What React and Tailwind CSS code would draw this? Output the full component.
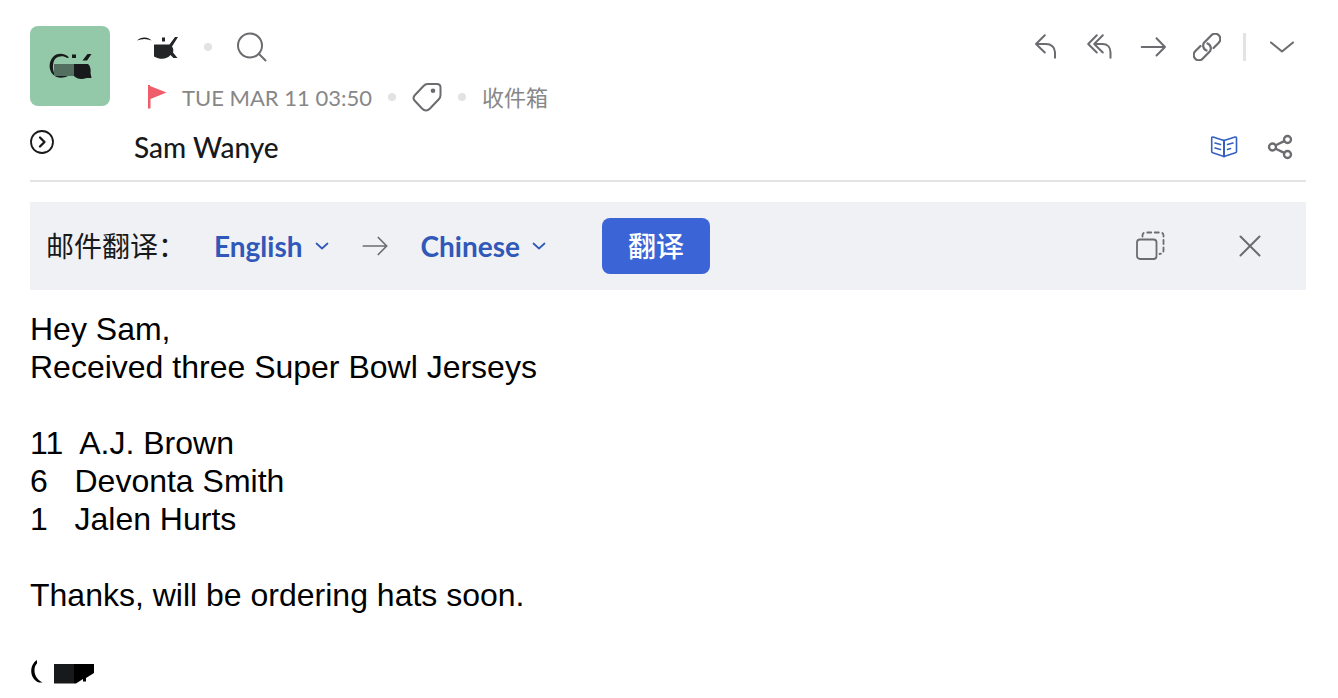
import clsx from 'clsx';

const LATO = "font-['Lato','Noto_Sans_CJK_SC',sans-serif]";

const strokeProps = {
    fill: 'none',
    stroke: 'currentColor',
    strokeWidth: 2,
    strokeLinecap: 'round',
    strokeLinejoin: 'round',
};

function Icon({ size = 28, className, children, ...rest }) {
    return (
        <svg
            width={size}
            height={size}
            viewBox={`0 0 ${size} ${size}`}
            className={clsx('shrink-0', className)}
            aria-hidden="true"
            {...strokeProps}
            {...rest}
        >
            {children}
        </svg>
    );
}

const mailActions = [
    {
        label: 'Reply',
        icon: <path d="M13.800 2.300L5 11l8.800 8.500M5 11h10c5.200 0 9 3.200 9 8.300v5.500" />,
    },
    {
        label: 'Reply all',
        icon: <path d="M11.800 2.300L3.200 11l8.600 8.500M17.800 2.300L9.200 11l8.600 8.500M9.200 11h8.300c4.700 0 8 3 8 8.300v5.500" />,
    },
    {
        label: 'Forward',
        icon: <path d="M2.700 14h23.300M17.500 5.300l8.500 8.700-8.500 8.500" />,
    },
    {
        label: 'Copy link',
        icon: (
            <g strokeWidth="2.200">
                <path d="M20.500 15l5.300-5.300a5.200 5.200 0 0 0-7.400-7.400L12 8.700a5.200 5.200 0 0 0 1.500 8.800" />
                <path d="M7.500 13l-5.300 5.300a5.200 5.200 0 0 0 7.400 7.400l6.400-6.400a5.200 5.200 0 0 0-1.500-8.800" />
            </g>
        ),
    },
];

function Dot() {
    return <span className="size-2 shrink-0 rounded-full bg-[#e3e3e3]" />;
}

function Avatar() {
    return (
        <div className="flex size-20 items-center justify-center rounded-lg bg-[#93c9a9]">
            <svg width="44" height="28" viewBox="0 0 44 28" aria-hidden="true">
                <path d="M21 5.500C17 1 9 .5 5 5C.5 10 .5 18 5 22.500C9 26.500 15 26.500 20 24H8C4 20 4 10 7.500 6.500C11 3.500 16 3.500 19 6z" fill="#17191a" />
                <path d="M6 12h20v12H6z" fill="#526f60" />
                <path d="M24 2.500h4v3.500h-4zM34.500 8.500l5-6.500h4L39 8.500zM26 12h14c2.500 2 3 6 2.500 9l1 5h-5c-4 1.500-9.500 1.500-12.500-2z" fill="#17191a" />
            </svg>
        </div>
    );
}

function LanguageSelect({ label, value }) {
    return (
        <div className="relative flex items-center text-[#3058b8]">
            <select
                aria-label={label}
                defaultValue={value}
                className="field-sizing-content cursor-pointer appearance-none bg-transparent pr-[26px] text-[28px] leading-9 font-bold focus:outline-none"
            >
                <option>English</option>
                <option>Chinese</option>
            </select>
            <Icon size={14} className="pointer-events-none absolute right-0">
                <path d="M1.500 4.500L7 9.500l5.500-5" strokeWidth="1.700" />
            </Icon>
        </div>
    );
}

function MailHeader() {
    return (
        <header className="flex border-b-2 border-[#e3e3e3] pt-[22px] pb-2">
            <div className="w-[104px] shrink-0 pt-1">
                <Avatar />
                <button type="button" aria-label="Show details" className="mt-6 block text-[#17191a]">
                    <Icon size={24}>
                        <circle cx="12" cy="12" r="11" strokeWidth="1.800" />
                        <path d="M10 7.500l4.500 4.500-4.500 4.500" strokeWidth="2.300" />
                    </Icon>
                </button>
            </div>

            <div className={clsx('min-w-0 grow', LATO)}>
                <div className="flex h-[50px] items-center justify-between">
                    <div className="flex items-center gap-6 text-[#6b6b70]">
                        {/* Masked sender name */}
                        <svg width="46" height="32" viewBox="0 0 46 32" aria-label="Sender" role="img">
                            <path d="M3 9.500C7 5.500 14 5.500 17.500 9.500C13 7.500 8 7.500 3 9.500z" fill="#17191a" />
                            <path d="M28 6.500h3v4h-3zM20 13.500h15.500l5.500-7.500h3l-6 9.500c1.500 2 1.500 4 1 6l4.500 5.500h-4l-3-3c-4 4.500-10 5-16.500 1.500z" fill="#232627" />
                        </svg>
                        <Dot />
                        <button type="button" aria-label="Search">
                            <Icon size={32}>
                                <circle cx="14" cy="14.500" r="12" />
                                <path d="M23 23l6.500 6.500" />
                            </Icon>
                        </button>
                    </div>
                    <div className="flex items-center pr-[10px] text-[#6b6b70]">
                        <div className="flex gap-[26px]">
                            {mailActions.map((action) => (
                                <button key={action.label} type="button" aria-label={action.label}>
                                    <Icon>{action.icon}</Icon>
                                </button>
                            ))}
                        </div>
                        <span className="mx-[22px] h-7 w-[3px] bg-[#e3e3e3]" />
                        <button type="button" aria-label="More">
                            <Icon>
                                <path d="M3 9.500l11 9 11-9" />
                            </Icon>
                        </button>
                    </div>
                </div>

                <div className="flex h-[50px] items-center gap-4 pl-3 text-[22px] text-[#878787]">
                    <div className="flex items-center gap-3">
                        <Icon size={24} fill="#ef5c6a" stroke="none">
                            <path d="M2 0h2v1l16.500 6.500L4.500 14v9.500H2z" />
                        </Icon>
                        <time>TUE MAR 11 03:50</time>
                    </div>
                    <Dot />
                    <button type="button" aria-label="Tag" className="text-[#6b6b70]">
                        <Icon size={30}>
                            <path d="M15.500 2H25q3.500 0 3.500 3.500V13q0 2.500-1.700 4.300L18 26.500q-4 4-8 0L3 19q-3-3 0-6l8.500-9q1.800-2 4-2z" />
                            <circle cx="21" cy="8.700" r="2.300" fill="currentColor" stroke="none" />
                        </Icon>
                    </button>
                    <Dot />
                    <a href="#inbox">收件箱</a>
                </div>

                <div className="flex h-[50px] items-center justify-between">
                    <p className="text-[28px] font-medium text-[#17191a]">Sam Wanye</p>
                    <div className="flex gap-7 pr-3">
                        <button type="button" aria-label="Reading view" className="text-[#3560c0]">
                            <Icon>
                                <path d="M14 7.500L3 4q-1.300-.3-1.300 1V18.500q0 1 1 1.300L14 23.500l11.500-3.700q1-.3 1-1.300V5q0-1.300-1.500-1zM5 10l5.500 1.500M5 15l5.500 1.500M17.500 11.500l5.500-1.500M17.500 16.500l3-1" strokeWidth="1.600" />
                                <path d="M14 7.500v16" strokeWidth="2" />
                            </Icon>
                        </button>
                        <button type="button" aria-label="Share" className="text-[#6b6b70]">
                            <Icon strokeWidth="2.300">
                                <circle cx="6.500" cy="14" r="3.500" />
                                <circle cx="21.500" cy="6.500" r="3.500" />
                                <circle cx="21.500" cy="21.500" r="3.500" />
                                <path d="M9.800 12.300l8.400-4.200M9.800 15.700l8.400 4.200" />
                            </Icon>
                        </button>
                    </div>
                </div>
            </div>
        </header>
    );
}

function TranslateBar() {
    return (
        <section className={clsx('mt-5 flex h-[88px] items-center justify-between bg-[#f0f1f4] pr-[42px] pl-4', LATO)}>
            <div className="flex items-center">
                <span className="w-[168px] text-[28px] text-[#17191a]">邮件翻译：</span>
                <LanguageSelect label="Source language" value="English" />
                <Icon className="mx-8 text-[#6b6b70]">
                    <path d="M2.300 14h23.400M17.300 5.500l8.400 8.500-8.400 8.500" strokeWidth="1.700" />
                </Icon>
                <LanguageSelect label="Target language" value="Chinese" />
                <button type="button" className="ml-14 h-14 rounded-lg bg-[#3b64d6] px-[26px] text-[28px] font-medium text-white">
                    翻译
                </button>
            </div>
            <div className="flex items-center gap-[70px] text-[#6b6b70]">
                <button type="button" aria-label="Open side by side">
                    <Icon size={30} strokeWidth="1.800">
                        <rect x="1" y="8.500" width="19.500" height="19.500" rx="3" />
                        <path d="M6.500 5.500V4.500q0-3 3-3h15q3 0 3 3v15q0 3-4 3.500" strokeDasharray="4 3.500" />
                    </Icon>
                </button>
                <button type="button" aria-label="Close">
                    <Icon>
                        <path d="M4.500 4.500l19 19M23.500 4.500l-19 19" />
                    </Icon>
                </button>
            </div>
        </section>
    );
}

const bodyLines = [
    'Hey Sam,',
    'Received three Super Bowl Jerseys',
    '',
    '11  A.J. Brown',
    '6   Devonta Smith',
    '1   Jalen Hurts',
    '',
    'Thanks, will be ordering hats soon.',
    '',
];

function MailBody() {
    return (
        <article className="mt-5 font-['Liberation_Sans',Arial,sans-serif] text-[32px] leading-[38px] text-black">
            {bodyLines.map((line, i) => (
                <p key={i} className="min-h-[38px] whitespace-pre-wrap">{line}</p>
            ))}
            {/* Masked signature */}
            <svg width="66" height="38" viewBox="0 0 66 38" className="block" aria-label="Signature" role="img">
                <path d="M7 8C-1 13-1 27 9 30.500h3.500C3 26 3 15 7 11.500z" fill="#000" />
                <path d="M24 12h20v19.500H24z" fill="#17191a" />
                <path d="M44 12h20v9l-8 5v3.500h-3V27l-7 4.500h-2z" fill="#000" />
            </svg>
        </article>
    );
}

export default function App() {
    return (
        <main className="min-h-screen bg-white pr-8 pl-[30px]">
            <MailHeader />
            <TranslateBar />
            <MailBody />
        </main>
    );
}
